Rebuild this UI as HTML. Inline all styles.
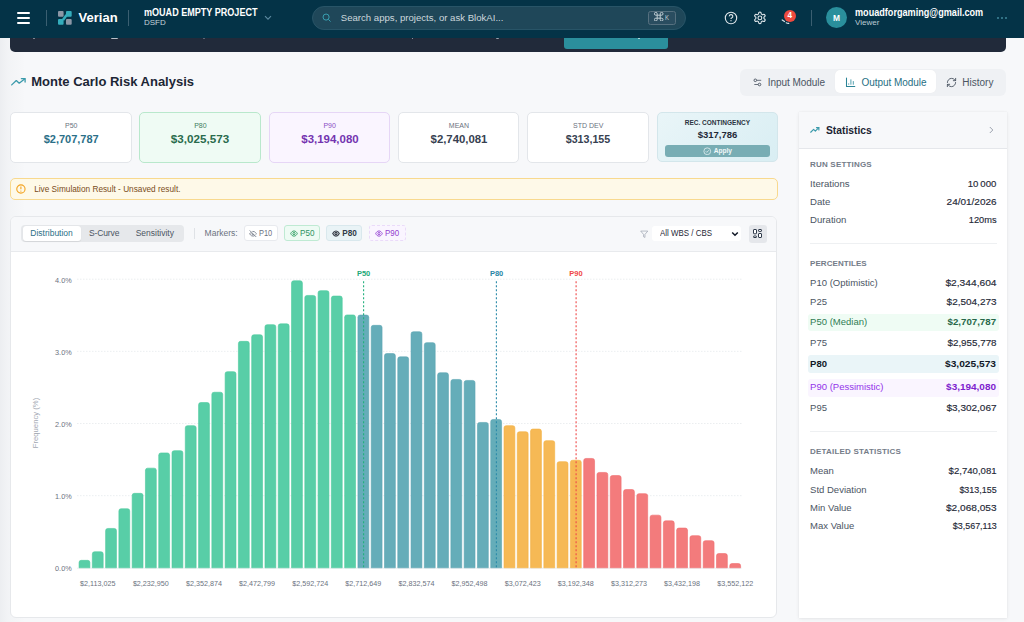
<!DOCTYPE html>
<html><head><meta charset="utf-8"><style>
html,body{margin:0;padding:0;}
body{width:1024px;height:622px;overflow:hidden;position:relative;background:#f7f8fa;font-family:"Liberation Sans", sans-serif;}
.t{position:absolute;line-height:1;white-space:nowrap;}
.b{position:absolute;box-sizing:border-box;}
</style></head><body>
<div class="b" style="left:0px;top:38px;width:28px;height:584px;background:linear-gradient(to right,rgba(40,50,70,0.05),rgba(40,50,70,0.025) 8px,rgba(40,50,70,0) 26px);"></div>
<div class="b" style="left:0px;top:0px;width:1024px;height:38px;background:#043347;"></div>
<div class="b" style="left:16.5px;top:12.2px;width:13px;height:1.6px;background:#fff;border-radius:1px;"></div>
<div class="b" style="left:16.5px;top:17.3px;width:13px;height:1.6px;background:#fff;border-radius:1px;"></div>
<div class="b" style="left:16.5px;top:22.2px;width:13px;height:1.6px;background:#fff;border-radius:1px;"></div>
<div class="b" style="left:46px;top:10px;width:1px;height:16px;background:#3b5f71;"></div>
<svg class="b" style="left:57px;top:10px" width="16" height="16" viewBox="0 0 16 16">
<rect x="1" y="1" width="5.6" height="5.7" rx="1" fill="#8c97a6"/>
<rect x="9" y="1" width="5.7" height="5.7" rx="1" fill="#34adbc"/>
<rect x="1" y="9.1" width="5.6" height="5.6" rx="1" fill="#34adbc"/>
<rect x="9" y="9.1" width="5.7" height="5.6" rx="1" fill="#8c97a6"/>
<path d="M9.6 5.0 L6.0 10.0" stroke="#34adbc" stroke-width="2.6" stroke-linecap="butt"/>
</svg>
<div class="t" style="left:78.60px;top:11.35px;font-size:13px;font-weight:700;color:#ffffff;">Verian</div>
<div class="b" style="left:128px;top:10px;width:1px;height:16px;background:#3b5f71;"></div>
<div class="t" style="left:144.00px;top:7.85px;font-size:10px;font-weight:700;color:#ffffff;transform:scaleX(0.905);transform-origin:0 0;">mOUAD EMPTY PROJECT</div>
<div class="t" style="left:144.00px;top:18.85px;font-size:8px;font-weight:400;color:#c4d3db;">DSFD</div>
<svg class="b" style="left:264px;top:15px" width="8" height="6" viewBox="0 0 8 6"><path d="M1 1.2 L4 4.2 L7 1.2" fill="none" stroke="#5d8aa0" stroke-width="1.1"/></svg>
<div class="b" style="left:311.5px;top:6px;width:374.5px;height:24.2px;background:#1f4759;border:1px solid #285467;border-radius:13px;"></div>
<svg class="b" style="left:322px;top:13.3px" width="9.5" height="9.5" viewBox="0 0 10 10"><circle cx="4.3" cy="4.3" r="3.2" fill="none" stroke="#3aa3b5" stroke-width="1"/><path d="M6.7 6.7 L9 9" stroke="#3aa3b5" stroke-width="1"/></svg>
<div class="t" style="left:340.80px;top:13.05px;font-size:9.6px;font-weight:400;color:#cdd7dd;">Search apps, projects, or ask BlokAI...</div>
<div class="b" style="left:648px;top:11px;width:28px;height:14px;border:1px solid #56707f;border-radius:2.5px;box-sizing:border-box;background:#2a4d60;"></div>
<svg class="b" style="left:654.2px;top:11.8px" width="9.4" height="9.4" viewBox="0 0 10 10"><g fill="none" stroke="#c3d0d6" stroke-width="1.05"><path d="M3.4 3.4 H6.6 V6.6 H3.4 Z M3.4 3.4 V1.9 A1.5 1.5 0 1 0 1.9 3.4 H3.4 M6.6 3.4 V1.9 A1.5 1.5 0 1 1 8.1 3.4 H6.6 M3.4 6.6 V8.1 A1.5 1.5 0 1 1 1.9 6.6 H3.4 M6.6 6.6 V8.1 A1.5 1.5 0 1 0 8.1 6.6 H6.6"/></g></svg>
<div class="t" style="left:665.40px;top:14.35px;font-size:7px;font-weight:400;color:#c3d0d6;transform:scaleX(0.85);transform-origin:0 0;">K</div>
<svg class="b" style="left:722.7px;top:9.9px" width="16" height="16" viewBox="0 0 16 16"><circle cx="8" cy="8" r="5.7" fill="none" stroke="#dfe6ea" stroke-width="1.1"/><path d="M6.3 6.4 A1.75 1.75 0 1 1 8.5 8.0 C8.1 8.25 8 8.5 8 9.0" fill="none" stroke="#dfe6ea" stroke-width="1.15"/><circle cx="8" cy="10.7" r="0.65" fill="#dfe6ea"/></svg>
<svg class="b" style="left:752.5px;top:11px" width="13.8" height="13.8" viewBox="0 0 24 24"><path d="M12.22 2h-.44a2 2 0 0 0-2 2v.18a2 2 0 0 1-1 1.73l-.43.25a2 2 0 0 1-2 0l-.15-.08a2 2 0 0 0-2.73.73l-.22.38a2 2 0 0 0 .73 2.73l.15.1a2 2 0 0 1 1 1.72v.51a2 2 0 0 1-1 1.74l-.15.09a2 2 0 0 0-.73 2.73l.22.38a2 2 0 0 0 2.73.73l.15-.08a2 2 0 0 1 2 0l.43.25a2 2 0 0 1 1 1.73V20a2 2 0 0 0 2 2h.44a2 2 0 0 0 2-2v-.18a2 2 0 0 1 1-1.73l.43-.25a2 2 0 0 1 2 0l.15.08a2 2 0 0 0 2.73-.73l.22-.39a2 2 0 0 0-.73-2.73l-.15-.08a2 2 0 0 1-1-1.74v-.5a2 2 0 0 1 1-1.74l.15-.09a2 2 0 0 0 .73-2.73l-.22-.38a2 2 0 0 0-2.73-.73l-.15.08a2 2 0 0 1-2 0l-.43-.25a2 2 0 0 1-1-1.73V4a2 2 0 0 0-2-2z" fill="none" stroke="#dfe6ea" stroke-width="1.9"/><circle cx="12" cy="12" r="3.3" fill="none" stroke="#dfe6ea" stroke-width="1.9"/></svg>
<svg class="b" style="left:780px;top:18px" width="10" height="8" viewBox="0 0 10 8"><path d="M2.2 1.9 L4.5 3.5 M6.2 4.8 Q7.5 5.6 8.8 5.4" fill="none" stroke="#d5e0e6" stroke-width="1.2" stroke-linecap="round"/></svg>
<div class="b" style="left:783.9px;top:9.8px;width:12px;height:12px;background:#ee4a3f;border-radius:50%;"></div>
<div class="t" style="left:639.80px;width:300px;text-align:center;top:11.75px;font-size:8.2px;font-weight:700;color:#ffffff;">4</div>
<div class="b" style="left:810.5px;top:10px;width:1px;height:15.5px;background:#3b5f71;"></div>
<div class="b" style="left:826px;top:7px;width:21px;height:21px;background:#2a8f9c;border-radius:50%;"></div>
<div class="t" style="left:686.50px;width:300px;text-align:center;top:14.15px;font-size:8.4px;font-weight:700;color:#ffffff;">M</div>
<div class="t" style="left:855.00px;top:7.85px;font-size:10px;font-weight:700;color:#ffffff;transform:scaleX(0.91);transform-origin:0 0;">mouadforgaming@gmail.com</div>
<div class="t" style="left:855.00px;top:18.85px;font-size:8px;font-weight:400;color:#bccad3;">Viewer</div>
<div class="b" style="left:997.1px;top:17.2px;width:1.8px;height:1.8px;background:#3f8598;border-radius:50%;"></div>
<div class="b" style="left:1001.1px;top:17.2px;width:1.8px;height:1.8px;background:#3f8598;border-radius:50%;"></div>
<div class="b" style="left:1005.1px;top:17.2px;width:1.8px;height:1.8px;background:#3f8598;border-radius:50%;"></div>
<div class="b" style="left:10.3px;top:38px;width:996px;height:13.5px;background:#212a3a;border-radius:0 0 5px 5px;"></div>
<div class="b" style="left:564.2px;top:38px;width:104.2px;height:10.8px;background:#2b8f9c;border-radius:0 0 3px 3px;"></div>
<div class="b" style="left:32.6px;top:38px;width:2px;height:1.2px;background:#9aa3ae;border-radius:0 0 1px 1px;"></div>
<div class="b" style="left:110.8px;top:38px;width:7px;height:1.2px;background:#b9c0c8;border-radius:0 0 1px 1px;"></div>
<div class="b" style="left:202.6px;top:38px;width:2px;height:1.2px;background:#6f7a88;border-radius:0 0 1px 1px;"></div>
<div class="b" style="left:411.6px;top:38px;width:1.5px;height:1.2px;background:#8d96a2;border-radius:0 0 1px 1px;"></div>
<div class="b" style="left:496px;top:38px;width:3px;height:1.2px;background:#9aa3ae;border-radius:0 0 1px 1px;"></div>
<div class="b" style="left:637.5px;top:38px;width:2px;height:1.2px;background:#d8eef0;border-radius:0 0 1px 1px;"></div>
<svg class="b" style="left:10.6px;top:78.2px" width="15" height="7.6" viewBox="0 0 15 7.6"><path d="M0.7 6.9 L5.3 2.6 L8.2 5.2 L13.9 0.8" fill="none" stroke="#3a9aab" stroke-width="1.3" stroke-linejoin="round" stroke-linecap="round"/><path d="M10.4 0.7 L14.1 0.7 L14.1 4" fill="none" stroke="#3a9aab" stroke-width="1.3" stroke-linejoin="round" stroke-linecap="round"/></svg>
<div class="t" style="left:31.25px;top:75.35px;font-size:13px;font-weight:700;color:#1c2635;">Monte Carlo Risk Analysis</div>
<div class="b" style="left:739.6px;top:68.5px;width:266.6px;height:27px;background:#eff1f4;border-radius:6px;"></div>
<div class="b" style="left:835.3px;top:70.2px;width:100.7px;height:23.2px;background:#ffffff;border-radius:5px;box-shadow:0 0 1px rgba(0,0,0,0.06);"></div>
<svg class="b" style="left:753px;top:77px" width="10" height="10" viewBox="0 0 10 10"><path d="M3.5 3.3 H8.2 M1.3 7.5 H5.5" stroke="#5b6472" stroke-width="0.9"/><circle cx="2.3" cy="3.3" r="1.3" fill="#eff1f4" stroke="#4f5866" stroke-width="0.95"/><circle cx="6.5" cy="7.5" r="1.3" fill="#eff1f4" stroke="#4f5866" stroke-width="0.95"/></svg>
<div class="t" style="left:767.70px;top:77.85px;font-size:10px;font-weight:400;color:#4b5563;letter-spacing:-0.05px;">Input Module</div>
<svg class="b" style="left:845px;top:77px" width="11" height="11" viewBox="0 0 11 11"><path d="M1.5 1.1 V9.4 H9.8" fill="none" stroke="#2b8496" stroke-width="1.05" stroke-linecap="round"/><path d="M3.7 6.4 V7.7 M5.9 2.4 V7.7 M8.3 4.1 V7.7" stroke="#4a9bab" stroke-width="0.95"/></svg>
<div class="t" style="left:861.50px;top:77.85px;font-size:10px;font-weight:400;color:#276f84;letter-spacing:-0.05px;">Output Module</div>
<svg class="b" style="left:946px;top:77px" width="11" height="11" viewBox="0 0 24 24"><path d="M3 12a9 9 0 0 1 9-9 9.75 9.75 0 0 1 6.74 2.74L21 8" fill="none" stroke="#4b5563" stroke-width="2.0" stroke-linecap="round"/><path d="M21 3v5h-5" fill="none" stroke="#4b5563" stroke-width="2.0" stroke-linecap="round"/><path d="M21 12a9 9 0 0 1-9 9 9.75 9.75 0 0 1-6.74-2.74L3 16" fill="none" stroke="#4b5563" stroke-width="2.0" stroke-linecap="round"/><path d="M8 16H3v5" fill="none" stroke="#4b5563" stroke-width="2.0" stroke-linecap="round"/></svg>
<div class="t" style="left:962.30px;top:77.85px;font-size:10px;font-weight:400;color:#4b5563;">History</div>
<div class="b" style="left:10.2px;top:112.2px;width:121.4px;height:50.4px;background:#ffffff;border:1px solid #e3e6ea;border-radius:5px;"></div>
<div class="t" style="left:-78.80px;width:300px;text-align:center;top:122.35px;font-size:7px;font-weight:400;color:#6b7280;">P50</div>
<div class="t" style="left:-78.80px;width:300px;text-align:center;top:133.85px;font-size:11px;font-weight:700;color:#2b6f88;transform:scaleX(1.0);transform-origin:50% 0;">$2,707,787</div>
<div class="b" style="left:139.45px;top:112.2px;width:121.4px;height:50.4px;background:#effbf4;border:1px solid #b9e8cc;border-radius:5px;"></div>
<div class="t" style="left:50.45px;width:300px;text-align:center;top:122.35px;font-size:7px;font-weight:400;color:#3f7d60;">P80</div>
<div class="t" style="left:50.45px;width:300px;text-align:center;top:133.85px;font-size:11px;font-weight:700;color:#2a6b4d;transform:scaleX(1.059);transform-origin:50% 0;">$3,025,573</div>
<div class="b" style="left:268.70000000000005px;top:112.2px;width:121.4px;height:50.4px;background:#faf5ff;border:1px solid #e6d6f6;border-radius:5px;"></div>
<div class="t" style="left:179.70px;width:300px;text-align:center;top:122.35px;font-size:7px;font-weight:400;color:#8a4fc4;">P90</div>
<div class="t" style="left:179.70px;width:300px;text-align:center;top:133.85px;font-size:11px;font-weight:700;color:#7434b0;transform:scaleX(1.042);transform-origin:50% 0;">$3,194,080</div>
<div class="b" style="left:397.95000000000005px;top:112.2px;width:121.4px;height:50.4px;background:#ffffff;border:1px solid #e3e6ea;border-radius:5px;"></div>
<div class="t" style="left:308.95px;width:300px;text-align:center;top:122.35px;font-size:7px;font-weight:400;color:#6b7280;">MEAN</div>
<div class="t" style="left:308.95px;width:300px;text-align:center;top:133.85px;font-size:11px;font-weight:700;color:#374151;transform:scaleX(1.033);transform-origin:50% 0;">$2,740,081</div>
<div class="b" style="left:527.2px;top:112.2px;width:121.4px;height:50.4px;background:#ffffff;border:1px solid #e3e6ea;border-radius:5px;"></div>
<div class="t" style="left:438.20px;width:300px;text-align:center;top:122.35px;font-size:7px;font-weight:400;color:#6b7280;">STD DEV</div>
<div class="t" style="left:438.20px;width:300px;text-align:center;top:133.85px;font-size:11px;font-weight:700;color:#374151;transform:scaleX(0.97);transform-origin:50% 0;">$313,155</div>
<div class="b" style="left:656.85px;top:112.3px;width:121.2px;height:50px;background:linear-gradient(135deg,#e9f5f8,#d9eef3);border:1px solid #d3e6eb;border-radius:5px;"></div>
<div class="t" style="left:567.45px;width:300px;text-align:center;top:119.60px;font-size:6.5px;font-weight:700;color:#2b3441;">REC. CONTINGENCY</div>
<div class="t" style="left:567.45px;width:300px;text-align:center;top:130.10px;font-size:9.5px;font-weight:700;color:#1f2937;">$317,786</div>
<div class="b" style="left:664.9px;top:144.5px;width:105.1px;height:12.5px;background:#78adb4;border-radius:3px;"></div>
<svg class="b" style="left:703px;top:146.5px" width="8.5" height="8.5" viewBox="0 0 10 10"><circle cx="5" cy="5" r="4" fill="none" stroke="#e8f3f4" stroke-width="0.9"/><path d="M3.2 5 L4.5 6.3 L6.9 3.8" fill="none" stroke="#e8f3f4" stroke-width="0.9"/></svg>
<div class="t" style="left:713.70px;top:147.55px;font-size:6.6px;font-weight:700;color:#f2f8f9;">Apply</div>
<div class="b" style="left:10.2px;top:178.2px;width:767.4px;height:21.5px;background:#fef9e8;border:1px solid #f8d98e;border-radius:5px;"></div>
<svg class="b" style="left:16px;top:184.2px" width="10" height="10" viewBox="0 0 10 10"><circle cx="4.9" cy="5" r="4.15" fill="none" stroke="#f3a321" stroke-width="1.1"/><path d="M4.9 2.6 V5.3" stroke="#f3a321" stroke-width="1.1"/><circle cx="4.9" cy="7.1" r="0.6" fill="#f3a321"/></svg>
<div class="t" style="left:34.20px;top:185.72px;font-size:8.25px;font-weight:400;color:#7a4c20;">Live Simulation Result - Unsaved result.</div>
<div class="b" style="left:10.3px;top:215.8px;width:767.2px;height:402.0px;background:#ffffff;border:1px solid #e6e8eb;border-radius:6px;overflow:hidden;"></div>
<div class="b" style="left:11.3px;top:216.8px;width:765.2px;height:35.0px;background:#f7f8fa;border-bottom:1px solid #e8eaed;border-radius:5px 5px 0 0;"></div>
<div class="b" style="left:21.1px;top:224.9px;width:162.5px;height:17.6px;background:#e6e8eb;border-radius:4px;"></div>
<div class="b" style="left:22.5px;top:226.1px;width:58.5px;height:15px;background:#ffffff;border-radius:3px;box-shadow:0 0.5px 1px rgba(0,0,0,0.08);"></div>
<div class="t" style="left:30.30px;top:229.10px;font-size:8.5px;font-weight:400;color:#2a6f86;">Distribution</div>
<div class="t" style="left:88.90px;top:229.10px;font-size:8.5px;font-weight:400;color:#4b5563;letter-spacing:-0.1px;">S-Curve</div>
<div class="t" style="left:135.70px;top:229.10px;font-size:8.5px;font-weight:400;color:#4b5563;">Sensitivity</div>
<div class="b" style="left:193.8px;top:228.4px;width:1px;height:10.2px;background:#dfe2e6;"></div>
<div class="t" style="left:204.60px;top:229.10px;font-size:8.5px;font-weight:400;color:#6b7280;">Markers:</div>
<div class="b" style="left:243.6px;top:225.4px;width:34.2px;height:15.8px;background:#ffffff;border:1px solid #e8eaee;border-radius:3px;"></div>
<svg class="b" style="left:248.5px;top:229.5px" width="8" height="7.5" viewBox="0 0 24 22"><path d="M9.9 4.2A9.1 9.1 0 0 1 12 4c7 0 10 7 10 7a13.2 13.2 0 0 1-1.7 2.7" fill="none" stroke="#6b7280" stroke-width="2.4"/><path d="M6.6 6.6A13.5 13.5 0 0 0 2 11s3 7 10 7a9.7 9.7 0 0 0 5.4-1.6" fill="none" stroke="#6b7280" stroke-width="2.4"/><path d="M14.1 13.1a3 3 0 1 1-4.2-4.2" fill="none" stroke="#6b7280" stroke-width="2.4"/><path d="M2 1 L22 21" stroke="#6b7280" stroke-width="2.4"/></svg>
<div class="t" style="left:259.30px;top:229.75px;font-size:8.2px;font-weight:400;color:#6b7280;transform:scaleX(0.91);transform-origin:0 0;">P10</div>
<div class="b" style="left:284.2px;top:225.4px;width:36.3px;height:15.8px;background:#eefbf4;border:1px solid #bfead3;border-radius:3px;"></div>
<svg class="b" style="left:290px;top:230px" width="8" height="7.1" viewBox="0 0 9 8"><path d="M0.8 4 C1.8 1.9 3 1.1 4.5 1.1 C6 1.1 7.2 1.9 8.2 4 C7.2 6.1 6 6.9 4.5 6.9 C3 6.9 1.8 6.1 0.8 4 Z" fill="none" stroke="#2f9e63" stroke-width="1.05"/><circle cx="4.5" cy="4" r="1.25" fill="none" stroke="#2f9e63" stroke-width="1.05"/></svg>
<div class="t" style="left:299.80px;top:229.75px;font-size:8.2px;font-weight:400;color:#2f9263;transform:scaleX(0.99);transform-origin:0 0;">P50</div>
<div class="b" style="left:326.3px;top:225.4px;width:36.2px;height:15.8px;background:#e9f3f6;border:1px solid #d9e8ed;border-radius:3px;"></div>
<svg class="b" style="left:331.8px;top:230px" width="8" height="7.1" viewBox="0 0 9 8"><path d="M0.8 4 C1.8 1.9 3 1.1 4.5 1.1 C6 1.1 7.2 1.9 8.2 4 C7.2 6.1 6 6.9 4.5 6.9 C3 6.9 1.8 6.1 0.8 4 Z" fill="none" stroke="#3a3f4a" stroke-width="1.3"/><circle cx="4.5" cy="4" r="1.25" fill="none" stroke="#3a3f4a" stroke-width="1.3"/></svg>
<div class="t" style="left:342.20px;top:229.75px;font-size:8.2px;font-weight:700;color:#323b48;">P80</div>
<div class="b" style="left:368.6px;top:225.4px;width:37px;height:15.8px;background:#faf5ff;border:1px dashed #eadbf9;border-radius:3px;"></div>
<svg class="b" style="left:374.6px;top:230px" width="8" height="7.1" viewBox="0 0 9 8"><path d="M0.8 4 C1.8 1.9 3 1.1 4.5 1.1 C6 1.1 7.2 1.9 8.2 4 C7.2 6.1 6 6.9 4.5 6.9 C3 6.9 1.8 6.1 0.8 4 Z" fill="none" stroke="#9b4fd6" stroke-width="1.1"/><circle cx="4.5" cy="4" r="1.25" fill="none" stroke="#9b4fd6" stroke-width="1.1"/></svg>
<div class="t" style="left:384.70px;top:229.75px;font-size:8.2px;font-weight:400;color:#9340d0;transform:scaleX(0.97);transform-origin:0 0;">P90</div>
<svg class="b" style="left:639.5px;top:229.5px" width="8.5" height="8.5" viewBox="0 0 24 24"><path d="M22 3H2l8 9.46V19l4 2v-8.54L22 3z" fill="none" stroke="#9ca3af" stroke-width="2"/></svg>
<div class="b" style="left:651.9px;top:226.3px;width:89.1px;height:15px;background:#ffffff;border-radius:3px;"></div>
<div class="t" style="left:659.70px;top:229.20px;font-size:8.3px;font-weight:400;color:#1f2937;transform:scaleX(0.955);transform-origin:0 0;">All WBS / CBS</div>
<svg class="b" style="left:731px;top:230.5px" width="8" height="6" viewBox="0 0 8 6"><path d="M1.2 1.5 L4 4.3 L6.8 1.5" fill="none" stroke="#111827" stroke-width="1.5"/></svg>
<div class="b" style="left:749px;top:225.2px;width:17.7px;height:17.5px;background:#e5e7eb;border-radius:3px;"></div>
<svg class="b" style="left:752px;top:228px" width="11" height="11" viewBox="0 0 11 11"><g fill="#ffffff" stroke="#2f3a4a" stroke-width="1"><rect x="1.5" y="1.5" width="3" height="4.3" rx="0.5"/><rect x="6.5" y="1.5" width="3" height="1.9" rx="0.5"/><rect x="6.5" y="5.5" width="3" height="4" rx="0.5"/><rect x="1.5" y="8" width="3" height="1.5" rx="0.5"/></g></svg>
<svg class="b" style="left:0;top:0" width="1024" height="622" viewBox="0 0 1024 622"><line x1="77" y1="495.65" x2="741.5" y2="495.65" stroke="#e3e6ea" stroke-width="0.7" stroke-dasharray="1.5 1.5"/><line x1="77" y1="423.50" x2="741.5" y2="423.50" stroke="#e3e6ea" stroke-width="0.7" stroke-dasharray="1.5 1.5"/><line x1="77" y1="351.35" x2="741.5" y2="351.35" stroke="#e3e6ea" stroke-width="0.7" stroke-dasharray="1.5 1.5"/><line x1="77" y1="279.20" x2="741.5" y2="279.20" stroke="#e3e6ea" stroke-width="0.7" stroke-dasharray="1.5 1.5"/><line x1="77" y1="568.20" x2="741.5" y2="568.20" stroke="#e5e7eb" stroke-width="0.8"/><path d="M79.05 567.8 V562.55 Q79.05 560.35 81.25 560.35 H87.70 Q89.90 560.35 89.90 562.55 V567.8 Z" fill="#58cea7" stroke="#4cc99c" stroke-width="0.6"/><path d="M92.33 567.8 V553.95 Q92.33 551.75 94.53 551.75 H100.98 Q103.18 551.75 103.18 553.95 V567.8 Z" fill="#58cea7" stroke="#4cc99c" stroke-width="0.6"/><path d="M105.61 567.8 V530.65 Q105.61 528.45 107.81 528.45 H114.26 Q116.46 528.45 116.46 530.65 V567.8 Z" fill="#58cea7" stroke="#4cc99c" stroke-width="0.6"/><path d="M118.89 567.8 V510.95 Q118.89 508.75 121.09 508.75 H127.54 Q129.74 508.75 129.74 510.95 V567.8 Z" fill="#58cea7" stroke="#4cc99c" stroke-width="0.6"/><path d="M132.17 567.8 V495.55 Q132.17 493.35 134.37 493.35 H140.82 Q143.02 493.35 143.02 495.55 V567.8 Z" fill="#58cea7" stroke="#4cc99c" stroke-width="0.6"/><path d="M145.45 567.8 V470.35 Q145.45 468.15 147.65 468.15 H154.10 Q156.30 468.15 156.30 470.35 V567.8 Z" fill="#58cea7" stroke="#4cc99c" stroke-width="0.6"/><path d="M158.73 567.8 V455.15 Q158.73 452.95 160.93 452.95 H167.38 Q169.58 452.95 169.58 455.15 V567.8 Z" fill="#58cea7" stroke="#4cc99c" stroke-width="0.6"/><path d="M172.01 567.8 V452.85 Q172.01 450.65 174.21 450.65 H180.66 Q182.86 450.65 182.86 452.85 V567.8 Z" fill="#58cea7" stroke="#4cc99c" stroke-width="0.6"/><path d="M185.29 567.8 V427.85 Q185.29 425.65 187.49 425.65 H193.94 Q196.14 425.65 196.14 427.85 V567.8 Z" fill="#58cea7" stroke="#4cc99c" stroke-width="0.6"/><path d="M198.57 567.8 V404.75 Q198.57 402.55 200.77 402.55 H207.22 Q209.42 402.55 209.42 404.75 V567.8 Z" fill="#58cea7" stroke="#4cc99c" stroke-width="0.6"/><path d="M211.85 567.8 V394.45 Q211.85 392.25 214.05 392.25 H220.50 Q222.70 392.25 222.70 394.45 V567.8 Z" fill="#58cea7" stroke="#4cc99c" stroke-width="0.6"/><path d="M225.13 567.8 V373.85 Q225.13 371.65 227.33 371.65 H233.78 Q235.98 371.65 235.98 373.85 V567.8 Z" fill="#58cea7" stroke="#4cc99c" stroke-width="0.6"/><path d="M238.41 567.8 V343.55 Q238.41 341.35 240.61 341.35 H247.06 Q249.26 341.35 249.26 343.55 V567.8 Z" fill="#58cea7" stroke="#4cc99c" stroke-width="0.6"/><path d="M251.69 567.8 V336.95 Q251.69 334.75 253.89 334.75 H260.34 Q262.54 334.75 262.54 336.95 V567.8 Z" fill="#58cea7" stroke="#4cc99c" stroke-width="0.6"/><path d="M264.97 567.8 V326.85 Q264.97 324.65 267.17 324.65 H273.62 Q275.82 324.65 275.82 326.85 V567.8 Z" fill="#58cea7" stroke="#4cc99c" stroke-width="0.6"/><path d="M278.25 567.8 V326.05 Q278.25 323.85 280.45 323.85 H286.90 Q289.10 323.85 289.10 326.05 V567.8 Z" fill="#58cea7" stroke="#4cc99c" stroke-width="0.6"/><path d="M291.53 567.8 V282.95 Q291.53 280.75 293.73 280.75 H300.18 Q302.38 280.75 302.38 282.95 V567.8 Z" fill="#58cea7" stroke="#4cc99c" stroke-width="0.6"/><path d="M304.81 567.8 V297.65 Q304.81 295.45 307.01 295.45 H313.46 Q315.66 295.45 315.66 297.65 V567.8 Z" fill="#58cea7" stroke="#4cc99c" stroke-width="0.6"/><path d="M318.09 567.8 V292.85 Q318.09 290.65 320.29 290.65 H326.74 Q328.94 290.65 328.94 292.85 V567.8 Z" fill="#58cea7" stroke="#4cc99c" stroke-width="0.6"/><path d="M331.37 567.8 V298.25 Q331.37 296.05 333.57 296.05 H340.02 Q342.22 296.05 342.22 298.25 V567.8 Z" fill="#58cea7" stroke="#4cc99c" stroke-width="0.6"/><path d="M344.65 567.8 V317.15 Q344.65 314.95 346.85 314.95 H353.30 Q355.50 314.95 355.50 317.15 V567.8 Z" fill="#58cea7" stroke="#4cc99c" stroke-width="0.6"/><path d="M357.93 567.8 V317.25 Q357.93 315.05 360.13 315.05 H366.58 Q368.78 315.05 368.78 317.25 V567.8 Z" fill="#65adb9" stroke="#5aa5b2" stroke-width="0.6"/><path d="M371.21 567.8 V327.55 Q371.21 325.35 373.41 325.35 H379.86 Q382.06 325.35 382.06 327.55 V567.8 Z" fill="#65adb9" stroke="#5aa5b2" stroke-width="0.6"/><path d="M384.49 567.8 V355.75 Q384.49 353.55 386.69 353.55 H393.14 Q395.34 353.55 395.34 355.75 V567.8 Z" fill="#65adb9" stroke="#5aa5b2" stroke-width="0.6"/><path d="M397.77 567.8 V359.05 Q397.77 356.85 399.97 356.85 H406.42 Q408.62 356.85 408.62 359.05 V567.8 Z" fill="#65adb9" stroke="#5aa5b2" stroke-width="0.6"/><path d="M411.05 567.8 V333.95 Q411.05 331.75 413.25 331.75 H419.70 Q421.90 331.75 421.90 333.95 V567.8 Z" fill="#65adb9" stroke="#5aa5b2" stroke-width="0.6"/><path d="M424.33 567.8 V344.85 Q424.33 342.65 426.53 342.65 H432.98 Q435.18 342.65 435.18 344.85 V567.8 Z" fill="#65adb9" stroke="#5aa5b2" stroke-width="0.6"/><path d="M437.61 567.8 V374.95 Q437.61 372.75 439.81 372.75 H446.26 Q448.46 372.75 448.46 374.95 V567.8 Z" fill="#65adb9" stroke="#5aa5b2" stroke-width="0.6"/><path d="M450.89 567.8 V381.65 Q450.89 379.45 453.09 379.45 H459.54 Q461.74 379.45 461.74 381.65 V567.8 Z" fill="#65adb9" stroke="#5aa5b2" stroke-width="0.6"/><path d="M464.17 567.8 V382.65 Q464.17 380.45 466.37 380.45 H472.82 Q475.02 380.45 475.02 382.65 V567.8 Z" fill="#65adb9" stroke="#5aa5b2" stroke-width="0.6"/><path d="M477.45 567.8 V424.65 Q477.45 422.45 479.65 422.45 H486.10 Q488.30 422.45 488.30 424.65 V567.8 Z" fill="#65adb9" stroke="#5aa5b2" stroke-width="0.6"/><path d="M490.73 567.8 V421.65 Q490.73 419.45 492.93 419.45 H499.38 Q501.58 419.45 501.58 421.65 V567.8 Z" fill="#65adb9" stroke="#5aa5b2" stroke-width="0.6"/><path d="M504.01 567.8 V427.85 Q504.01 425.65 506.21 425.65 H512.66 Q514.86 425.65 514.86 427.85 V567.8 Z" fill="#f6b955" stroke="#f4b040" stroke-width="0.6"/><path d="M517.29 567.8 V433.95 Q517.29 431.75 519.49 431.75 H525.94 Q528.14 431.75 528.14 433.95 V567.8 Z" fill="#f6b955" stroke="#f4b040" stroke-width="0.6"/><path d="M530.57 567.8 V431.25 Q530.57 429.05 532.77 429.05 H539.22 Q541.42 429.05 541.42 431.25 V567.8 Z" fill="#f6b955" stroke="#f4b040" stroke-width="0.6"/><path d="M543.85 567.8 V442.85 Q543.85 440.65 546.05 440.65 H552.50 Q554.70 440.65 554.70 442.85 V567.8 Z" fill="#f6b955" stroke="#f4b040" stroke-width="0.6"/><path d="M557.13 567.8 V463.85 Q557.13 461.65 559.33 461.65 H565.78 Q567.98 461.65 567.98 463.85 V567.8 Z" fill="#f6b955" stroke="#f4b040" stroke-width="0.6"/><path d="M570.41 567.8 V462.45 Q570.41 460.25 572.61 460.25 H579.06 Q581.26 460.25 581.26 462.45 V567.8 Z" fill="#f6b955" stroke="#f4b040" stroke-width="0.6"/><path d="M583.69 567.8 V460.65 Q583.69 458.45 585.89 458.45 H592.34 Q594.54 458.45 594.54 460.65 V567.8 Z" fill="#f37b7c" stroke="#ef6d6e" stroke-width="0.6"/><path d="M596.97 567.8 V474.65 Q596.97 472.45 599.17 472.45 H605.62 Q607.82 472.45 607.82 474.65 V567.8 Z" fill="#f37b7c" stroke="#ef6d6e" stroke-width="0.6"/><path d="M610.25 567.8 V477.75 Q610.25 475.55 612.45 475.55 H618.90 Q621.10 475.55 621.10 477.75 V567.8 Z" fill="#f37b7c" stroke="#ef6d6e" stroke-width="0.6"/><path d="M623.53 567.8 V491.75 Q623.53 489.55 625.73 489.55 H632.18 Q634.38 489.55 634.38 491.75 V567.8 Z" fill="#f37b7c" stroke="#ef6d6e" stroke-width="0.6"/><path d="M636.81 567.8 V495.85 Q636.81 493.65 639.01 493.65 H645.46 Q647.66 493.65 647.66 495.85 V567.8 Z" fill="#f37b7c" stroke="#ef6d6e" stroke-width="0.6"/><path d="M650.09 567.8 V517.35 Q650.09 515.15 652.29 515.15 H658.74 Q660.94 515.15 660.94 517.35 V567.8 Z" fill="#f37b7c" stroke="#ef6d6e" stroke-width="0.6"/><path d="M663.37 567.8 V523.05 Q663.37 520.85 665.57 520.85 H672.02 Q674.22 520.85 674.22 523.05 V567.8 Z" fill="#f37b7c" stroke="#ef6d6e" stroke-width="0.6"/><path d="M676.65 567.8 V530.25 Q676.65 528.05 678.85 528.05 H685.30 Q687.50 528.05 687.50 530.25 V567.8 Z" fill="#f37b7c" stroke="#ef6d6e" stroke-width="0.6"/><path d="M689.93 567.8 V537.85 Q689.93 535.65 692.13 535.65 H698.58 Q700.78 535.65 700.78 537.85 V567.8 Z" fill="#f37b7c" stroke="#ef6d6e" stroke-width="0.6"/><path d="M703.21 567.8 V542.85 Q703.21 540.65 705.41 540.65 H711.86 Q714.06 540.65 714.06 542.85 V567.8 Z" fill="#f37b7c" stroke="#ef6d6e" stroke-width="0.6"/><path d="M716.49 567.8 V555.75 Q716.49 553.55 718.69 553.55 H725.14 Q727.34 553.55 727.34 555.75 V567.8 Z" fill="#f37b7c" stroke="#ef6d6e" stroke-width="0.6"/><path d="M729.77 567.8 V565.75 Q729.77 563.55 731.97 563.55 H738.42 Q740.62 563.55 740.62 565.75 V567.8 Z" fill="#f37b7c" stroke="#ef6d6e" stroke-width="0.6"/><line x1="363.6" y1="281.3" x2="363.6" y2="567.8" stroke="#22b07d" stroke-width="1.1" stroke-dasharray="2 2"/><line x1="496.4" y1="281.3" x2="496.4" y2="567.8" stroke="#2a8aa8" stroke-width="1.1" stroke-dasharray="2 2"/><line x1="576.1" y1="281.3" x2="576.1" y2="567.8" stroke="#ef4a4a" stroke-width="1.1" stroke-dasharray="2 2"/></svg>
<div class="t" style="left:213.60px;width:300px;text-align:center;top:270.10px;font-size:7.5px;font-weight:700;color:#22a877;">P50</div>
<div class="t" style="left:346.60px;width:300px;text-align:center;top:270.10px;font-size:7.5px;font-weight:700;color:#2a85a5;">P80</div>
<div class="t" style="left:426.00px;width:300px;text-align:center;top:270.10px;font-size:7.5px;font-weight:700;color:#ef4848;">P90</div>
<div class="t" style="right:952.30px;top:565.20px;font-size:7.3px;font-weight:400;color:#6b7280;text-align:right;">0.0%</div>
<div class="t" style="right:952.30px;top:493.20px;font-size:7.3px;font-weight:400;color:#6b7280;text-align:right;">1.0%</div>
<div class="t" style="right:952.30px;top:421.20px;font-size:7.3px;font-weight:400;color:#6b7280;text-align:right;">2.0%</div>
<div class="t" style="right:952.30px;top:349.20px;font-size:7.3px;font-weight:400;color:#6b7280;text-align:right;">3.0%</div>
<div class="t" style="right:952.30px;top:277.20px;font-size:7.3px;font-weight:400;color:#6b7280;text-align:right;">4.0%</div>
<div class="t" style="left:-115.40px;width:300px;text-align:center;top:420.00px;font-size:7.7px;font-weight:400;color:#a3a9b3;transform:rotate(-90deg);transform-origin:150px 3px;">Frequency (%)</div>
<div class="t" style="left:-52.25px;width:300px;text-align:center;top:580.25px;font-size:7.2px;font-weight:400;color:#6b7280;">$2,113,025</div>
<div class="t" style="left:0.88px;width:300px;text-align:center;top:580.25px;font-size:7.2px;font-weight:400;color:#6b7280;">$2,232,950</div>
<div class="t" style="left:54.00px;width:300px;text-align:center;top:580.25px;font-size:7.2px;font-weight:400;color:#6b7280;">$2,352,874</div>
<div class="t" style="left:107.12px;width:300px;text-align:center;top:580.25px;font-size:7.2px;font-weight:400;color:#6b7280;">$2,472,799</div>
<div class="t" style="left:160.24px;width:300px;text-align:center;top:580.25px;font-size:7.2px;font-weight:400;color:#6b7280;">$2,592,724</div>
<div class="t" style="left:213.36px;width:300px;text-align:center;top:580.25px;font-size:7.2px;font-weight:400;color:#6b7280;">$2,712,649</div>
<div class="t" style="left:266.48px;width:300px;text-align:center;top:580.25px;font-size:7.2px;font-weight:400;color:#6b7280;">$2,832,574</div>
<div class="t" style="left:319.60px;width:300px;text-align:center;top:580.25px;font-size:7.2px;font-weight:400;color:#6b7280;">$2,952,498</div>
<div class="t" style="left:372.71px;width:300px;text-align:center;top:580.25px;font-size:7.2px;font-weight:400;color:#6b7280;">$3,072,423</div>
<div class="t" style="left:425.83px;width:300px;text-align:center;top:580.25px;font-size:7.2px;font-weight:400;color:#6b7280;">$3,192,348</div>
<div class="t" style="left:478.95px;width:300px;text-align:center;top:580.25px;font-size:7.2px;font-weight:400;color:#6b7280;">$3,312,273</div>
<div class="t" style="left:532.07px;width:300px;text-align:center;top:580.25px;font-size:7.2px;font-weight:400;color:#6b7280;">$3,432,198</div>
<div class="t" style="left:585.19px;width:300px;text-align:center;top:580.25px;font-size:7.2px;font-weight:400;color:#6b7280;">$3,552,122</div>
<div class="b" style="left:799px;top:112.3px;width:208px;height:505.6px;background:#ffffff;box-shadow:0 1px 4px rgba(0,0,0,0.07),0 0 1px rgba(0,0,0,0.08);"></div>
<div class="b" style="left:799px;top:112.3px;width:208px;height:36.6px;background:#f7f8fa;border-bottom:1px solid #e5e7eb;"></div>
<svg class="b" style="left:810.4px;top:127.4px" width="9.5" height="5.8" viewBox="0 0 16 10"><path d="M1 9 L6 4.2 L9 7 L15 1.2" fill="none" stroke="#3a9aab" stroke-width="2" stroke-linejoin="round" stroke-linecap="round"/><path d="M11 1.1 L15.1 1.1 L15.1 5" fill="none" stroke="#3a9aab" stroke-width="2" stroke-linejoin="round" stroke-linecap="round"/></svg>
<div class="t" style="left:825.90px;top:125.05px;font-size:10.6px;font-weight:700;color:#1a2433;transform:scaleX(0.97);transform-origin:0 0;">Statistics</div>
<svg class="b" style="left:988.3px;top:125.8px" width="7" height="8" viewBox="0 0 7 8"><path d="M1.8 1 L4.8 4 L1.8 7" fill="none" stroke="#9ca3af" stroke-width="1"/></svg>
<div class="t" style="left:810.10px;top:160.85px;font-size:8px;font-weight:700;color:#747c88;letter-spacing:0.18px;">RUN SETTINGS</div>
<div class="t" style="left:810.10px;top:179.05px;font-size:9.6px;font-weight:400;color:#4b5563;">Iterations</div>
<div class="t" style="right:27.60px;top:179.10px;font-size:9.5px;font-weight:400;color:#1f2937;text-align:right;-webkit-text-stroke:0.15px #1f2937;transform:scaleX(1.011);transform-origin:100% 0;">10&#8201;000</div>
<div class="t" style="left:810.10px;top:197.05px;font-size:9.6px;font-weight:400;color:#4b5563;">Date</div>
<div class="t" style="right:27.60px;top:197.10px;font-size:9.5px;font-weight:400;color:#1f2937;text-align:right;-webkit-text-stroke:0.15px #1f2937;transform:scaleX(1.051);transform-origin:100% 0;">24/01/2026</div>
<div class="t" style="left:810.10px;top:215.05px;font-size:9.6px;font-weight:400;color:#4b5563;">Duration</div>
<div class="t" style="right:27.60px;top:215.10px;font-size:9.5px;font-weight:400;color:#1f2937;text-align:right;-webkit-text-stroke:0.15px #1f2937;transform:scaleX(0.973);transform-origin:100% 0;">120ms</div>
<div class="b" style="left:810px;top:243px;width:187px;height:1px;background:#eef0f2;"></div>
<div class="t" style="left:810.10px;top:259.85px;font-size:8px;font-weight:700;color:#747c88;letter-spacing:0.05px;">PERCENTILES</div>
<div class="b" style="left:807.5px;top:313.8px;width:191.5px;height:17.2px;background:#effcf4;border-radius:3px;"></div>
<div class="b" style="left:807.5px;top:355px;width:191.5px;height:18px;background:#eaf5f8;border-radius:3px;"></div>
<div class="b" style="left:807.5px;top:378.6px;width:191.5px;height:18.3px;background:#faf5ff;border-radius:3px;"></div>
<div class="t" style="left:810.10px;top:278.10px;font-size:9.5px;font-weight:400;color:#4b5563;">P10 (Optimistic)</div>
<div class="t" style="right:27.60px;top:278.10px;font-size:9.5px;font-weight:400;color:#1f2937;text-align:right;-webkit-text-stroke:0.15px #1f2937;transform:scaleX(1.076);transform-origin:100% 0;">$2,344,604</div>
<div class="t" style="left:810.10px;top:297.10px;font-size:9.5px;font-weight:400;color:#4b5563;">P25</div>
<div class="t" style="right:27.60px;top:297.10px;font-size:9.5px;font-weight:400;color:#1f2937;text-align:right;-webkit-text-stroke:0.15px #1f2937;transform:scaleX(1.051);transform-origin:100% 0;">$2,504,273</div>
<div class="t" style="left:810.10px;top:317.10px;font-size:9.5px;font-weight:400;color:#2f7d55;">P50 (Median)</div>
<div class="t" style="right:27.60px;top:317.05px;font-size:9.6px;font-weight:700;color:#276749;text-align:right;transform:scaleX(1.009);transform-origin:100% 0;">$2,707,787</div>
<div class="t" style="left:810.10px;top:338.10px;font-size:9.5px;font-weight:400;color:#4b5563;">P75</div>
<div class="t" style="right:27.60px;top:338.10px;font-size:9.5px;font-weight:400;color:#1f2937;text-align:right;-webkit-text-stroke:0.15px #1f2937;transform:scaleX(1.032);transform-origin:100% 0;">$2,955,778</div>
<div class="t" style="left:810.10px;top:359.10px;font-size:9.5px;font-weight:700;color:#111827;">P80</div>
<div class="t" style="right:27.60px;top:359.05px;font-size:9.6px;font-weight:700;color:#111827;text-align:right;transform:scaleX(1.063);transform-origin:100% 0;">$3,025,573</div>
<div class="t" style="left:810.10px;top:382.10px;font-size:9.5px;font-weight:400;color:#9333ea;">P90 (Pessimistic)</div>
<div class="t" style="right:27.60px;top:382.05px;font-size:9.6px;font-weight:700;color:#7e22ce;text-align:right;transform:scaleX(1.04);transform-origin:100% 0;">$3,194,080</div>
<div class="t" style="left:810.10px;top:403.10px;font-size:9.5px;font-weight:400;color:#4b5563;">P95</div>
<div class="t" style="right:27.60px;top:403.10px;font-size:9.5px;font-weight:400;color:#1f2937;text-align:right;-webkit-text-stroke:0.15px #1f2937;transform:scaleX(1.053);transform-origin:100% 0;">$3,302,067</div>
<div class="b" style="left:810px;top:431px;width:187px;height:1px;background:#eef0f2;"></div>
<div class="t" style="left:810.10px;top:447.85px;font-size:8px;font-weight:700;color:#747c88;letter-spacing:0.2px;">DETAILED STATISTICS</div>
<div class="t" style="left:810.10px;top:466.10px;font-size:9.5px;font-weight:400;color:#4b5563;">Mean</div>
<div class="t" style="right:27.60px;top:466.10px;font-size:9.5px;font-weight:400;color:#1f2937;text-align:right;-webkit-text-stroke:0.15px #1f2937;transform:scaleX(1.008);transform-origin:100% 0;">$2,740,081</div>
<div class="t" style="left:810.10px;top:485.10px;font-size:9.5px;font-weight:400;color:#4b5563;">Std Deviation</div>
<div class="t" style="right:27.60px;top:485.10px;font-size:9.5px;font-weight:400;color:#1f2937;text-align:right;-webkit-text-stroke:0.15px #1f2937;transform:scaleX(0.94);transform-origin:100% 0;">$313,155</div>
<div class="t" style="left:810.10px;top:503.10px;font-size:9.5px;font-weight:400;color:#4b5563;">Min Value</div>
<div class="t" style="right:27.60px;top:503.10px;font-size:9.5px;font-weight:400;color:#1f2937;text-align:right;-webkit-text-stroke:0.15px #1f2937;transform:scaleX(1.063);transform-origin:100% 0;">$2,068,053</div>
<div class="t" style="left:810.10px;top:521.10px;font-size:9.5px;font-weight:400;color:#4b5563;">Max Value</div>
<div class="t" style="right:27.60px;top:521.10px;font-size:9.5px;font-weight:400;color:#1f2937;text-align:right;-webkit-text-stroke:0.15px #1f2937;transform:scaleX(0.941);transform-origin:100% 0;">$3,567,113</div>
</body></html>
